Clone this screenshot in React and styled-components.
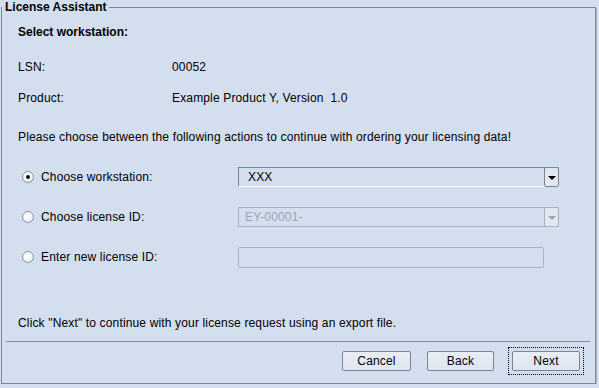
import React from "react";
import styled, { createGlobalStyle, css } from "styled-components";

const Global = createGlobalStyle`
  html, body { margin: 0; padding: 0; background: #d3deee; }
  body { font-family: "Liberation Sans", Arial, sans-serif; font-size: 12px; color: #000; letter-spacing: 0.15px; }
  * { box-sizing: border-box; }
`;

const Frame = styled.fieldset`
  margin: 0 3px 0 1px;
  padding: 0;
  height: 384px;
  min-inline-size: 0;
  border: 1px solid #7e8793;
  box-shadow: 1px 1px 0 #aab2bd;
  display: flex;
  flex-direction: column;
`;

const Legend = styled.legend`
  padding: 0 2px 0 3px;
  margin-left: 0;
  font-weight: bold;
  font-size: 12px;
  line-height: 14px;
  letter-spacing: 0;
`;

const Content = styled.div`
  flex: 1;
  display: flex;
  flex-direction: column;
  padding: 0 0 0 16px;
`;

const Heading = styled.div`
  font-weight: bold;
  letter-spacing: 0;
  line-height: 14px;
  margin-top: ${(p) => p.$top}px;
`;

const InfoRow = styled.div`
  display: grid;
  grid-template-columns: 154px auto;
  line-height: 14px;
  margin-top: ${(p) => p.$top}px;
`;

const Text = styled.div`
  line-height: 14px;
  margin-top: ${(p) => p.$top}px;
`;

const Choices = styled.div`
  display: grid;
  grid-template-columns: 216px 321px;
  grid-auto-rows: 20px;
  row-gap: 20px;
  margin: 23px 0 0 4px;
  align-items: center;
`;

const RadioLabel = styled.label`
  display: flex;
  align-items: center;
  gap: 7px;
`;

const Radio = styled.span`
  width: 12px;
  height: 12px;
  border-radius: 50%;
  border: 1px solid #8b95a2;
  background: radial-gradient(circle at 40% 35%, #ffffff 0%, #f2f5f9 50%, #d6dde7 100%);
  display: flex;
  align-items: center;
  justify-content: center;
  &::after {
    content: "";
    width: 4px;
    height: 4px;
    border-radius: 50%;
    background: ${(p) => (p.$checked ? "#111" : "transparent")};
  }
`;

const Combo = styled.div`
  height: 20px;
  display: flex;
  align-items: stretch;
  border: 1px solid;
  ${(p) =>
    p.$disabled
      ? css`
          border-color: #aab3bf;
          color: #9ca5b1;
        `
      : css`
          border-color: #7b8592 #d3deee #ffffff #7b8592;
          color: #000;
        `}
`;

const ComboText = styled.span`
  flex: 1;
  display: flex;
  align-items: center;
  padding-left: ${(p) => (p.$disabled ? 6 : 9)}px;
`;

const ArrowButton = styled.span`
  width: 15px;
  margin: -1px -1px -1px 0;
  border: 1px solid ${(p) => (p.$disabled ? "#aab3bf" : "#7b8592")};
  border-radius: 2px;
  background: #e1e8f2;
  display: flex;
  align-items: center;
  justify-content: center;
  &::after {
    content: "";
    border-left: 4px solid transparent;
    border-right: 4px solid transparent;
    border-top: 4px solid ${(p) => (p.$disabled ? "#9ca5b1" : "#000")};
    margin-top: 1px;
  }
`;

const Field = styled.div`
  width: 306px;
  height: 21px;
  border: 1px solid #aab3bf;
  border-radius: 2px;
`;

const Separator = styled.hr`
  margin: 11px 5px 0 4px;
  border: none;
  border-top: 1px solid #848d99;
  height: 0;
`;

const Footer = styled.div`
  display: flex;
  justify-content: flex-end;
  align-items: center;
  gap: 16px;
  padding: 9px 15px 12px 0;
`;

const Focus = styled.span`
  display: inline-flex;
  padding: 3px;
  margin: -4px -4px -4px -2px;
  border: 1px dotted #000;
`;

const Button = styled.button`
  width: ${(p) => p.$w}px;
  height: 20px;
  padding: 0;
  font-family: "Liberation Sans", Arial, sans-serif;
  font-size: 12px;
  letter-spacing: 0.15px;
  color: #000;
  background: linear-gradient(#e8edf5, #dfe6f1);
  border: 1px solid #7c8591;
  border-radius: 2px;
`;

export default function App() {
  return (
    <>
      <Global />
      <Frame>
        <Legend>License Assistant</Legend>
        <Content>
          <Heading $top={11}>Select workstation:</Heading>
          <InfoRow $top={21}>
            <span>LSN:</span>
            <span>00052</span>
          </InfoRow>
          <InfoRow $top={17}>
            <span>Product:</span>
            <span>Example Product Y, Version&nbsp; 1.0</span>
          </InfoRow>
          <Text $top={25}>
            Please choose between the following actions to continue with ordering your licensing data!
          </Text>
          <Choices>
            <RadioLabel>
              <Radio $checked />
              Choose workstation:
            </RadioLabel>
            <Combo>
              <ComboText>XXX</ComboText>
              <ArrowButton />
            </Combo>
            <RadioLabel>
              <Radio />
              Choose license ID:
            </RadioLabel>
            <Combo $disabled>
              <ComboText $disabled>EY-00001-</ComboText>
              <ArrowButton $disabled />
            </Combo>
            <RadioLabel>
              <Radio />
              Enter new license ID:
            </RadioLabel>
            <Field />
          </Choices>
          <Text $top={49}>
            Click "Next" to continue with your license request using an export file.
          </Text>
        </Content>
        <Separator />
        <Footer>
          <Button $w={69}>Cancel</Button>
          <Button $w={67}>Back</Button>
          <Focus>
            <Button $w={68}>Next</Button>
          </Focus>
        </Footer>
      </Frame>
    </>
  );
}
